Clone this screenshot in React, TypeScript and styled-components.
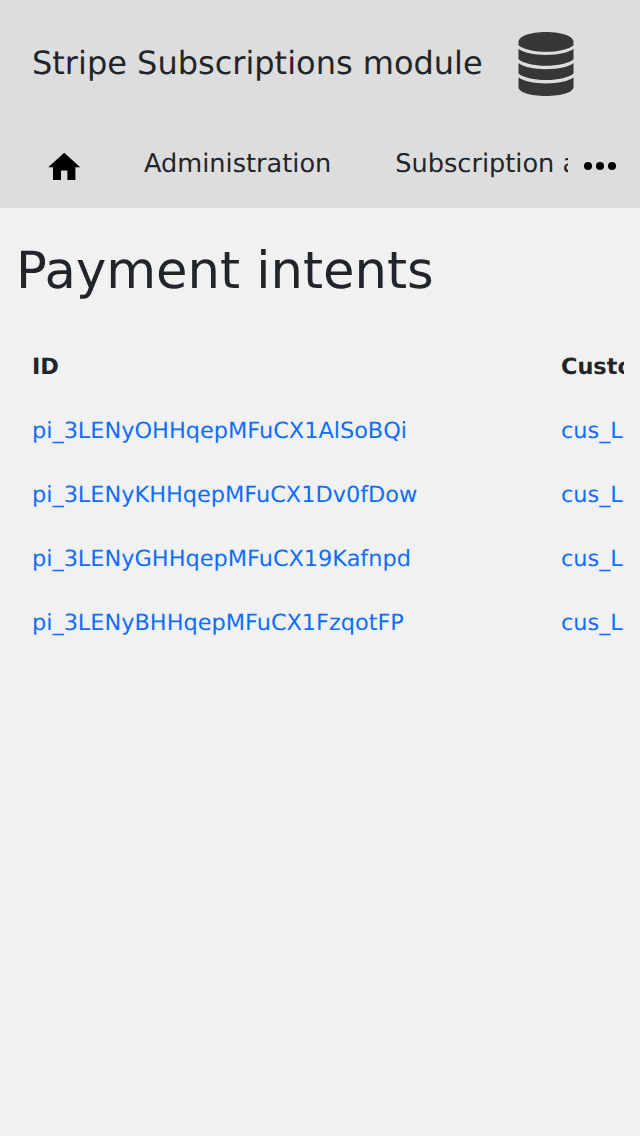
import React from 'react';
import styled, { createGlobalStyle } from 'styled-components';

const GlobalStyle = createGlobalStyle`
  * { box-sizing: border-box; }
  html, body { margin: 0; background: #f1f1f1; }
  body {
    font-family: "DejaVu Sans", sans-serif;
    font-size: 22.4px;
    color: #212529;
    text-rendering: geometricPrecision;
    overflow: hidden;
  }
`;

const Header = styled.header`
  height: 208px;
  background: #ddd;
`;

const Brand = styled.div`
  display: flex;
  align-items: center;
  height: 128px;
  padding: 0 0 2px 32px;
  font-size: 32px;
  white-space: nowrap;
`;

const BrandName = styled.span`
  width: 486px;
`;

const DatabaseIcon = styled.svg`
  width: 56px;
  height: 64px;
  margin-top: 2px;
  fill: #373737;
`;

const Nav = styled.nav`
  display: flex;
  height: 80px;
`;

const NavItems = styled.div`
  display: flex;
  width: 568px;
  overflow: hidden;
  white-space: nowrap;
`;

const HomeLink = styled.a`
  flex: none;
  width: 112px;
  padding: 20px 0 0 44.8px;
`;

const HomeIcon = styled.svg`
  display: block;
  width: 38.4px;
  height: 38.4px;
`;

const NavLink = styled.a`
  flex: none;
  padding: 17px 32px 15px;
  font-size: 25.6px;
  line-height: 38.4px;
`;

const MoreButton = styled.button`
  width: 64px;
  height: 76px;
  padding: 0 8px;
  border: 0;
  background: none;
`;

const MoreIcon = styled.svg`
  display: block;
  width: 48px;
  height: 48px;
`;

const Main = styled.main`
  padding: 33px 16px;
`;

const Title = styled.h1`
  margin: 0 0 34px;
  font-size: 51.2px;
  font-weight: 400;
  line-height: 60px;
`;

const TableScroll = styled.div`
  overflow: hidden;
`;

const Table = styled.table`
  width: 900px;
  table-layout: fixed;
  border-collapse: collapse;
  text-align: left;
  white-space: nowrap;
`;

const Cell = styled.td<{ $width?: number }>`
  width: ${(p) => (p.$width ? `${p.$width}px` : 'auto')};
  height: 64px;
  padding: 0 16px;
`;

const Link = styled.a`
  color: #0d6efd;
`;

const intents = [
  { id: 'pi_3LENyOHHqepMFuCX1AlSoBQi', customer: 'cus_Lw' },
  { id: 'pi_3LENyKHHqepMFuCX1Dv0fDow', customer: 'cus_Lw' },
  { id: 'pi_3LENyGHHqepMFuCX19Kafnpd', customer: 'cus_Lw' },
  { id: 'pi_3LENyBHHqepMFuCX1FzqotFP', customer: 'cus_Lw' },
];

export default function App() {
  return (
    <>
      <GlobalStyle />
      <Header>
        <Brand>
          <BrandName>Stripe Subscriptions module</BrandName>
          <DatabaseIcon viewBox="0 0 56 64">
            <path d="M.5 10C.5 4.200 12 0 28 0s27.500 4.200 27.500 10v3.200C51 17.200 40 19.800 28 19.800S5 17.200 .5 13.200z" />
            <path d="M.5 16.700C5 20.600 16 22.900 28 22.900s23-2.300 27.500-6.200v10.500C51 31.200 40 33.700 28 33.700S5 31.200 .5 27.200z" />
            <path d="M.5 31C5 34.900 16 37.200 28 37.200S51 34.900 55.500 31v10.500C51 45.500 40 48 28 48S5 45.500 .5 41.500z" />
            <path d="M.5 45.200C5 49.100 16 51.400 28 51.400s23-2.300 27.500-6.200V55c0 5.200-11.500 9-27.500 9S.5 60.200 .5 55z" />
          </DatabaseIcon>
        </Brand>
        <Nav>
          <NavItems>
            <HomeLink>
              <HomeIcon viewBox="0 0 24 24">
                <path d="M10 20v-6h4v6h5v-8h3L12 3 2 12h3v8z" />
              </HomeIcon>
            </HomeLink>
            <NavLink>Administration</NavLink>
            <NavLink>Subscription administration</NavLink>
          </NavItems>
          <MoreButton aria-label="More">
            <MoreIcon viewBox="0 0 24 24">
              <circle cx="6" cy="12" r="2" />
              <circle cx="12" cy="12" r="2" />
              <circle cx="18" cy="12" r="2" />
            </MoreIcon>
          </MoreButton>
        </Nav>
      </Header>
      <Main>
        <Title>Payment intents</Title>
        <TableScroll>
          <Table>
            <thead>
              <tr>
                <Cell as="th" $width={529}>ID</Cell>
                <Cell as="th">Customer</Cell>
              </tr>
            </thead>
            <tbody>
              {intents.map((intent) => (
                <tr key={intent.id}>
                  <Cell><Link>{intent.id}</Link></Cell>
                  <Cell><Link>{intent.customer}</Link></Cell>
                </tr>
              ))}
            </tbody>
          </Table>
        </TableScroll>
      </Main>
    </>
  );
}
